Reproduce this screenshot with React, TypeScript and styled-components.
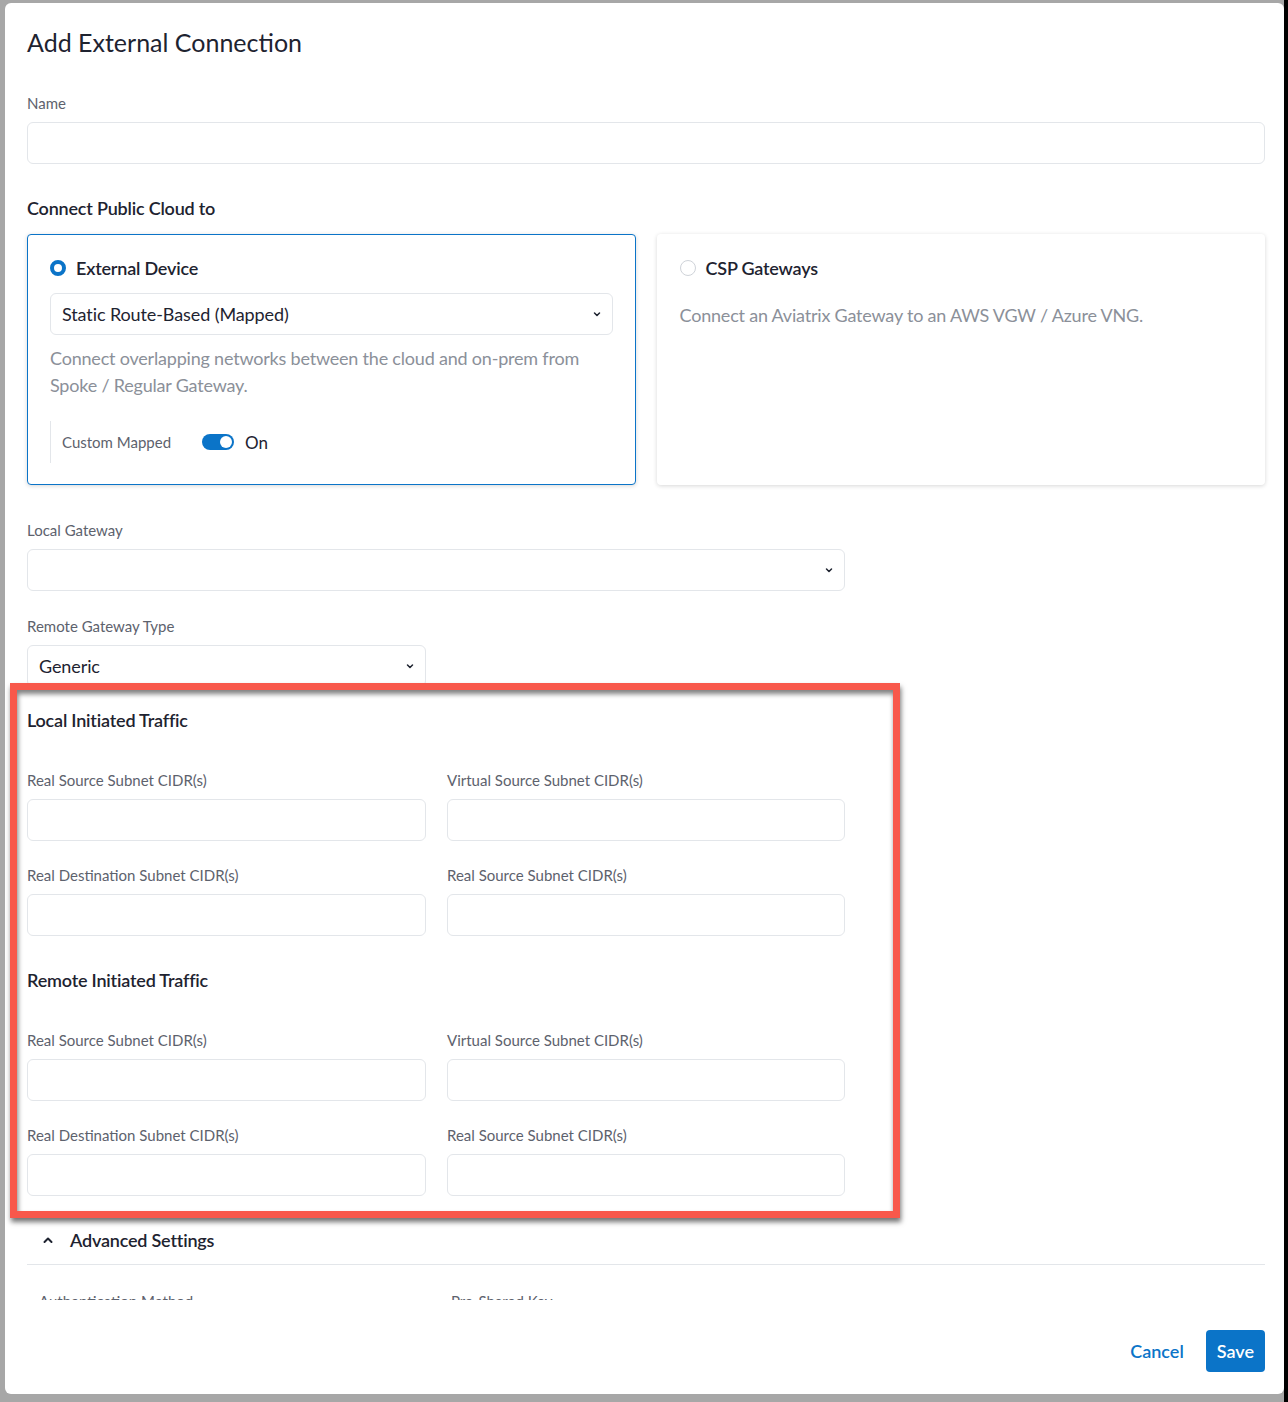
import React, { useState } from 'react';
import styled, { createGlobalStyle } from 'styled-components';

const GlobalStyle = createGlobalStyle`
  *, *::before, *::after { box-sizing: border-box; }
  html, body { margin: 0; padding: 0; background: #a7a7a7; }
  body { font-family: Lato, "Noto Sans", "Liberation Sans", sans-serif; color: #1e2330; }
`;

const Screen = styled.div`
  display: flex;
  width: 1288px;
  height: 1402px;
  padding: 3px 0 8px 5px;
  border-right: 4px solid #000;
  background: #a7a7a7;
`;

const Modal = styled.div`
  display: flex;
  flex-direction: column;
  width: 1279px;
  height: 1391px;
  background: #fff;
  border-radius: 6px;
  padding: 0 19px 0 22px;
`;

const Header = styled.div`
  padding-top: 22px;
`;

const Title = styled.h1`
  margin: 0;
  font-size: 25px;
  line-height: 34px;
  font-weight: 400;
  color: #1e2330;
`;

const Body = styled.div`
  flex: 1;
  min-height: 0;
  overflow: hidden;
  margin: 0 -19px 0 -22px;
  padding: 34px 19px 0 22px;
`;

const Label = styled.div`
  font-size: 15px;
  line-height: 20px;
  color: #5d626d;
  margin-bottom: 9px;
`;

const TextInput = styled.input`
  display: block;
  width: 100%;
  height: 42px;
  border: 1px solid #e3e6ea;
  border-radius: 6px;
  background: #fff;
  outline: none;
  font: inherit;
`;

const SelectBox = styled.div<{ $width?: string }>`
  display: flex;
  align-items: center;
  justify-content: space-between;
  width: ${(p) => p.$width || '100%'};
  height: 42px;
  padding: 0 10px 0 11px;
  border: 1px solid #e3e6ea;
  border-radius: 6px;
  background: #fff;
  font-size: 18px;
  letter-spacing: -0.1px;
  color: #1e2330;
`;

const SectionTitle = styled.h2<{ $mt?: number }>`
  margin: ${(p) => p.$mt ?? 0}px 0 0;
  font-size: 18px;
  line-height: 24px;
  font-weight: 600;
  letter-spacing: -0.2px;
  color: #1e2330;
`;

const Field = styled.div<{ $mt?: number }>`
  margin-top: ${(p) => p.$mt ?? 0}px;
`;

const CardGrid = styled.div`
  display: grid;
  grid-template-columns: 1fr 1fr;
  gap: 21px;
  margin-top: 14px;
`;

const Card = styled.div<{ $active?: boolean }>`
  padding: 21px 22px;
  border: 1px solid ${(p) => (p.$active ? '#0b74c8' : 'transparent')};
  border-radius: 4px;
  background: #fff;
  box-shadow: 0 1px 4px rgba(0, 0, 0, 0.16);
`;

const RadioRow = styled.div`
  display: flex;
  align-items: center;
  gap: 10px;
  height: 24px;
  font-size: 18px;
  font-weight: 600;
  letter-spacing: -0.2px;
  color: #1e2330;
`;

const Radio = styled.span<{ $checked?: boolean }>`
  width: 16px;
  height: 16px;
  border-radius: 50%;
  border: ${(p) => (p.$checked ? '4px solid #0b74c8' : '1px solid #cfd3d9')};
  background: #fff;
  flex: none;
`;

const Description = styled.p<{ $mt?: number }>`
  margin: ${(p) => p.$mt ?? 10}px 0 0;
  font-size: 18px;
  line-height: 27px;
  letter-spacing: -0.2px;
  color: #8b9099;
`;

const CardSelect = styled(SelectBox)`
  margin-top: 13px;
`;

const ToggleRow = styled.div`
  display: flex;
  align-items: center;
  height: 42px;
  margin-top: 22px;
  padding-left: 11px;
  border-left: 1px solid #e3e6ea;
`;

const ToggleLabel = styled.span`
  width: 140px;
  font-size: 15px;
  color: #5d626d;
`;

const Track = styled.button<{ $on: boolean }>`
  position: relative;
  width: 32px;
  height: 16px;
  padding: 0;
  border: none;
  border-radius: 8px;
  background: ${(p) => (p.$on ? '#0b74c8' : '#c5cad1')};
  cursor: pointer;

  &::after {
    content: '';
    position: absolute;
    top: 2px;
    left: ${(p) => (p.$on ? '18px' : '2px')};
    width: 12px;
    height: 12px;
    border-radius: 50%;
    background: #fff;
  }
`;

const ToggleText = styled.span`
  margin-left: 11px;
  font-size: 17px;
  color: #1e2330;
`;

const PairGrid = styled.div`
  display: grid;
  grid-template-columns: 399px 398px;
  column-gap: 21px;
  row-gap: 24px;
  margin-top: 38px;
`;

/* annotation frame drawn over the traffic sections */
const Highlight = styled.div`
  position: relative;
  margin-top: 21px;

  &::after {
    content: '';
    position: absolute;
    top: -25px;
    left: -17px;
    width: 890px;
    bottom: -22px;
    border: 7px solid #f8584b;
    box-shadow: 1px 4px 5px rgba(0, 0, 0, 0.55), inset 1px 4px 5px rgba(0, 0, 0, 0.5);
    pointer-events: none;
  }
`;

const Accordion = styled.div`
  margin-top: 26px;
`;

const AccordionHead = styled.div`
  display: flex;
  align-items: center;
  gap: 17px;
  height: 43px;
  padding: 0 0 7px 16px;
  border-bottom: 1px solid #e3e6ea;
  font-size: 18px;
  font-weight: 600;
  letter-spacing: -0.2px;
  color: #1e2330;
`;

const AccordionBody = styled.div`
  display: grid;
  grid-template-columns: 412px 412px;
  padding: 26px 12px 0;
`;

const Footer = styled.div`
  display: flex;
  justify-content: flex-end;
  align-items: center;
  gap: 22px;
  padding: 30px 0 22px;
`;

const CancelButton = styled.button`
  border: none;
  background: none;
  padding: 0;
  font: inherit;
  font-size: 18px;
  font-weight: 600;
  color: #0b74c8;
  cursor: pointer;
`;

const SaveButton = styled.button`
  height: 42px;
  padding: 0 11px;
  border: none;
  border-radius: 4px;
  background: #0b74c8;
  font: inherit;
  font-size: 18px;
  font-weight: 600;
  color: #fff;
  cursor: pointer;
`;

const Chevron = ({ up }: { up?: boolean }) => (
  <svg width="10" height="10" viewBox="0 0 10 10" fill="none">
    <path
      d={up ? 'M1.5 7L5 3.5L8.5 7' : 'M2.5 4L5 6.5L7.5 4'}
      stroke="#1e2330"
      strokeWidth={up ? 2 : 1.5}
      strokeLinecap="round"
      strokeLinejoin="round"
    />
  </svg>
);

const trafficFields = [
  'Real Source Subnet CIDR(s)',
  'Virtual Source Subnet CIDR(s)',
  'Real Destination Subnet CIDR(s)',
  'Real Source Subnet CIDR(s)',
];

const TrafficSection = ({ title, mt }: { title: string; mt?: number }) => (
  <>
    <SectionTitle $mt={mt}>{title}</SectionTitle>
    <PairGrid>
      {trafficFields.map((label, i) => (
        <div key={i}>
          <Label>{label}</Label>
          <TextInput />
        </div>
      ))}
    </PairGrid>
  </>
);

const App = () => {
  const [customMapped, setCustomMapped] = useState(true);

  return (
    <>
      <GlobalStyle />
      <Screen>
        <Modal>
          <Header>
            <Title>Add External Connection</Title>
          </Header>
          <Body>
            <Label>Name</Label>
            <TextInput />

            <SectionTitle $mt={32}>Connect Public Cloud to</SectionTitle>
            <CardGrid>
              <Card $active>
                <RadioRow>
                  <Radio $checked />
                  External Device
                </RadioRow>
                <CardSelect>
                  Static Route-Based (Mapped)
                  <Chevron />
                </CardSelect>
                <Description>
                  Connect overlapping networks between the cloud and on-prem from
                  Spoke / Regular Gateway.
                </Description>
                <ToggleRow>
                  <ToggleLabel>Custom Mapped</ToggleLabel>
                  <Track $on={customMapped} onClick={() => setCustomMapped(!customMapped)} />
                  <ToggleText>{customMapped ? 'On' : 'Off'}</ToggleText>
                </ToggleRow>
              </Card>
              <Card>
                <RadioRow>
                  <Radio />
                  CSP Gateways
                </RadioRow>
                <Description $mt={22}>
                  Connect an Aviatrix Gateway to an AWS VGW / Azure VNG.
                </Description>
              </Card>
            </CardGrid>

            <Field $mt={35}>
              <Label>Local Gateway</Label>
              <SelectBox $width="818px">
                <span />
                <Chevron />
              </SelectBox>
            </Field>

            <Field $mt={25}>
              <Label>Remote Gateway Type</Label>
              <SelectBox $width="399px">
                Generic
                <Chevron />
              </SelectBox>
            </Field>

            <Highlight>
              <TrafficSection title="Local Initiated Traffic" />
              <TrafficSection title="Remote Initiated Traffic" mt={32} />
            </Highlight>

            <Accordion>
              <AccordionHead>
                <Chevron up />
                Advanced Settings
              </AccordionHead>
              <AccordionBody>
                <Label>Authentication Method</Label>
                <Label>Pre-Shared Key</Label>
              </AccordionBody>
            </Accordion>
          </Body>
          <Footer>
            <CancelButton>Cancel</CancelButton>
            <SaveButton>Save</SaveButton>
          </Footer>
        </Modal>
      </Screen>
    </>
  );
};

export default App;
